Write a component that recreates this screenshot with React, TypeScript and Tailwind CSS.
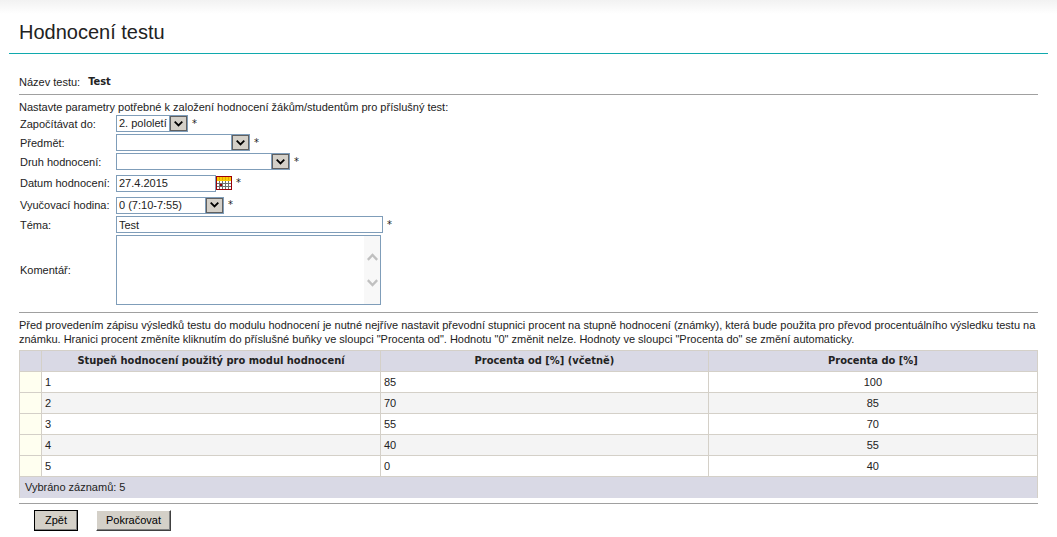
import type { ReactNode } from "react";

function Row({ id, label, height, required = true, children }: {
  id: string;
  label: string;
  height: string;
  required?: boolean;
  children: ReactNode;
}) {
  return (
    <div className={`flex items-center ${height}`}>
      <label htmlFor={id} className="w-24 shrink-0 whitespace-nowrap">{label}</label>
      {children}
      {required && <span className="ml-1 font-['DejaVu_Sans_Condensed','DejaVu_Sans',sans-serif]">*</span>}
    </div>
  );
}

function Select({ id, width, options }: { id: string; width: string; options: string[] }) {
  return (
    <div className={`relative h-[17px] ${width}`}>
      <select
        id={id}
        className="block h-full w-full appearance-none border border-[#7f9db9] bg-white pl-[2px] text-[11px] leading-[15px] text-[#222]"
      >
        {options.map((o) => <option key={o}>{o}</option>)}
      </select>
      <span className="pointer-events-none absolute inset-y-0 right-0 flex w-[19px] items-center justify-center border border-[#7f9db9] bg-[#d4d0c8] shadow-[inset_0_0_0_1px_#606060]">
        <svg width="9" height="6" viewBox="0 0 9 6" fill="none" stroke="#000" strokeWidth="1.8">
          <path d="M0.7 0.7 4.5 4.5 8.3 0.7" />
        </svg>
      </span>
    </div>
  );
}

function CalendarIcon() {
  return (
    <svg width="16" height="14" viewBox="0 0 16 14" shapeRendering="crispEdges">
      <rect width="16" height="14" fill="#9c0006" />
      <rect x="1" y="1" width="14" height="12" fill="#707070" />
      <rect x="1" y="1" width="14" height="4" fill="#ffcc00" />
      <path d="M3.5 1v3M6.5 1v3M9.5 1v3M12.5 1v3" stroke="#e0a800" />
      {[5, 8, 11].map((y) =>
        [1, 4, 7, 10, 13].map((x) => (
          <rect key={`${x}-${y}`} x={x} y={y} width="2" height="2" fill="#fff" />
        ))
      )}
      <rect x="4" y="8" width="2" height="2" fill="#9c0006" />
    </svg>
  );
}

const rows: [number, number, number][] = [
  [1, 85, 100],
  [2, 70, 85],
  [3, 55, 70],
  [4, 40, 55],
  [5, 0, 40],
];

const rule = "border-t border-[#a0a0a0]";
const cell = "border border-[#d4d0c8] px-[3px]";
const heading = `${cell} font-['DejaVu_Sans_Condensed','DejaVu_Sans',sans-serif]`;
const button =
  "h-[21px] border border-t-white border-l-white border-r-[#404040] border-b-[#404040] bg-[#d4d0c8] text-black shadow-[inset_-1px_-1px_0_#808080]";

export default function App() {
  return (
    <div className="bg-linear-to-b from-[#f2f2f2] to-white to-[14px] px-[9px] font-['Liberation_Sans',Arial,sans-serif] text-[11px] leading-[14px] text-[#222]">
      <header className="border-b border-[#10a9ad] px-[10px] pt-5 pb-[9px]">
        <h1 className="text-[20px] leading-6">Hodnocení testu</h1>
      </header>
      <main className="px-[10px] pt-[21px] pb-1">
        <p className="flex gap-2 pb-[5px]">
          <span>Název testu:</span>
          <b className="font-['DejaVu_Sans_Condensed','DejaVu_Sans',sans-serif]">Test</b>
        </p>
        <hr className={rule} />
        <p className="pt-[5px]">
          Nastavte parametry potřebné k založení hodnocení žákům/studentům pro příslušný test:
        </p>
        <form>
          <div className="pl-px">
            <Row id="term" label="Započítávat do:" height="h-[19px]">
              <Select id="term" width="w-[72px]" options={["2. pololetí"]} />
            </Row>
            <Row id="subject" label="Předmět:" height="h-[19px]">
              <Select id="subject" width="w-[134px]" options={[""]} />
            </Row>
            <Row id="kind" label="Druh hodnocení:" height="h-[19px]">
              <Select id="kind" width="w-[174px]" options={[""]} />
            </Row>
            <Row id="date" label="Datum hodnocení:" height="h-6">
              <input id="date" defaultValue="27.4.2015" className="h-[17px] w-[100px] border border-[#7f9db9] px-[2px]" />
              <button type="button" aria-label="Kalendář"><CalendarIcon /></button>
            </Row>
            <Row id="hour" label="Vyučovací hodina:" height="h-5">
              <Select id="hour" width="w-[108px]" options={["0 (7:10-7:55)"]} />
            </Row>
            <Row id="topic" label="Téma:" height="h-[19px]">
              <input id="topic" defaultValue="Test" className="h-[17px] w-[267px] border border-[#7f9db9] px-[2px]" />
            </Row>
            <Row id="comment" label="Komentář:" height="h-[72px]" required={false}>
              <div className="relative h-[70px] w-[265px]">
                <textarea id="comment" className="block h-full w-full resize-none border border-[#7f9db9] px-[2px]" />
                <span className="pointer-events-none absolute inset-y-px right-px flex w-4 flex-col items-center justify-center gap-[18px] bg-[#f8f8f8]">
                  <svg width="11" height="8" viewBox="0 0 11 8" fill="none" stroke="#c0c0c0" strokeWidth="2.4">
                    <path d="M0.8 6.8 5.5 2 10.2 6.8" />
                  </svg>
                  <svg width="11" height="8" viewBox="0 0 11 8" fill="none" stroke="#c0c0c0" strokeWidth="2.4">
                    <path d="M0.8 1.2 5.5 6 10.2 1.2" />
                  </svg>
                </span>
              </div>
            </Row>
          </div>
          <hr className={`mt-[6px] ${rule}`} />
          <p className="pt-[5px] pb-[4px]">
            Před provedením zápisu výsledků testu do modulu hodnocení je nutné nejříve nastavit převodní stupnici procent na stupně hodnocení (známky), která bude použita pro převod procentuálního výsledku testu na známku. Hranici procent změníte kliknutím do příslušné buňky ve sloupci "Procenta od". Hodnotu "0" změnit nelze. Hodnoty ve sloupci "Procenta do" se změní automaticky.
          </p>
          <table className="w-full table-fixed border-collapse">
            <colgroup>
              <col className="w-[22px]" />
              <col className="w-[33.3%]" />
              <col className="w-[32.2%]" />
              <col />
            </colgroup>
            <thead className="bg-[#d9d9e5]">
              <tr className="h-[21px]">
                <th className={heading} />
                <th className={heading}>Stupeň hodnocení použitý pro modul hodnocení</th>
                <th className={heading}>Procenta od [%] (včetně)</th>
                <th className={heading}>Procenta do [%]</th>
              </tr>
            </thead>
            <tbody>
              {rows.map(([grade, from, to]) => (
                <tr key={grade} className="h-[21px] even:bg-[#f4f4f4]">
                  <td className={`${cell} bg-[#fffff0]`} />
                  <td className={cell}>{grade}</td>
                  <td className={cell}>{from}</td>
                  <td className={`${cell} text-center`}>{to}</td>
                </tr>
              ))}
            </tbody>
            <tfoot className="bg-[#d9d9e5]">
              <tr className="h-[21px]">
                <td colSpan={4} className="border-x border-t border-[#d4d0c8] pl-[5px]">Vybráno záznamů: 5</td>
              </tr>
            </tfoot>
          </table>
          <hr className={`mt-[5px] ${rule}`} />
          <div className="flex gap-[18px] pt-[6px] pl-[15px]">
            <button type="button" className={`${button} w-11 outline outline-1 -outline-offset-1 outline-black`}>Zpět</button>
            <button type="submit" className={`${button} w-[75px]`}>Pokračovat</button>
          </div>
        </form>
      </main>
    </div>
  );
}
